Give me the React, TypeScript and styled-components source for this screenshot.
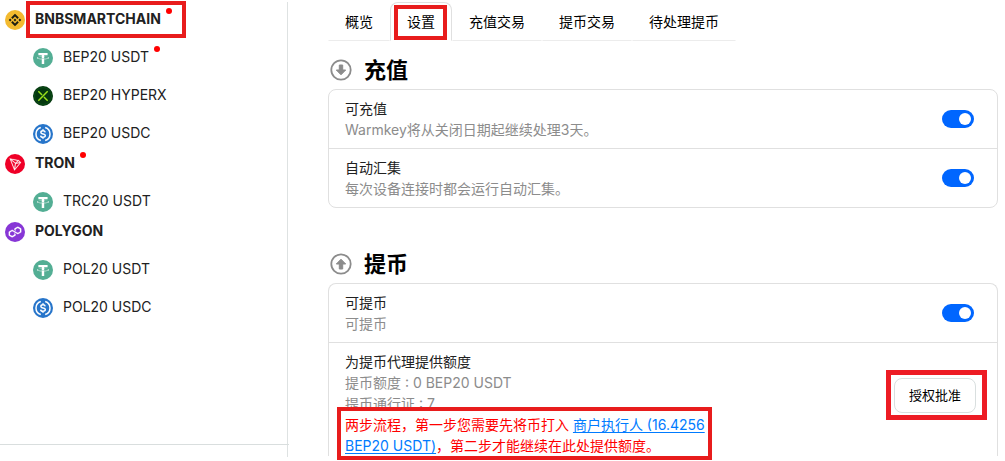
import React from "react";
import styled, { createGlobalStyle, css } from "styled-components";

const GlobalStyle = createGlobalStyle`
  *, *::before, *::after { box-sizing: border-box; }
  body {
    margin: 0;
    background: #fff;
    color: #212121;
    font: 14px/21px Inter, "Noto Sans CJK SC", sans-serif;
  }
  button, input { font: inherit; color: inherit; }
`;

const Page = styled.div`
  display: flex;
  min-height: 100vh;
  padding: 2px 7px 4px 0;
`;

const Sidebar = styled.nav`
  display: flex;
  flex-direction: column;
  flex: 0 0 288px;
  padding-top: 7px;
  border-right: 1px solid #dee2e2;
`;

const SidebarFooter = styled.div`
  height: 13px;
  margin: auto -2px 0 0;
  border-top: 1px solid #d9dede;
`;

const List = styled.ul`
  margin: 0;
  padding: 0;
  list-style: none;
`;

const Item = styled.a<{ $level: "chain" | "token" }>`
  display: flex;
  align-items: flex-start;
  gap: 10px;
  color: inherit;
  text-decoration: none;
  ${({ $level }) =>
    $level === "chain"
      ? css`
          height: 30px;
          padding: 1px 0 0 5px;
          font-weight: 700;
        `
      : css`
          height: 38px;
          padding: 9px 0 0 33px;
        `}
`;

const ItemLabel = styled.span`
  position: relative;
  display: flex;
  height: 20px;
  line-height: 18px;
`;

const Dot = styled.span`
  flex: none;
  width: 6px;
  height: 6px;
  margin: -2px 0 0 5px;
  border-radius: 50%;
  background: #f00;
`;

const Highlight = styled.span<{ $inset: string; $thick?: boolean }>`
  position: absolute;
  inset: ${({ $inset }) => $inset};
  border: ${({ $thick }) => ($thick ? "5px solid #ed1c24" : "4px solid #e81c1c")};
  pointer-events: none;
`;

const Main = styled.main`
  flex: 1;
  min-width: 0;
  padding-left: 40px;
`;

const Tabs = styled.div`
  display: flex;
`;

const Tab = styled.button<{ $active: boolean }>`
  position: relative;
  padding: 8px 16px;
  border: 1px solid transparent;
  border-bottom-color: #ececec;
  background: none;
  color: #000;
  white-space: nowrap;
  ${({ $active }) =>
    $active &&
    css`
      border-color: #e0e0e0 #e0e0e0 transparent;
      border-radius: 8px 8px 0 0;
    `}
`;

const Section = styled.section`
  padding-bottom: 27px;
  &:last-child { padding-bottom: 0; }
`;

const Heading = styled.h2`
  display: flex;
  align-items: center;
  gap: 12px;
  margin: 0;
  padding: 15px 0 5px 2px;
  color: #000;
  font-size: 22px;
  line-height: 28px;
  font-weight: 700;
`;

const Card = styled.div<{ $open?: boolean }>`
  border: 1px solid #e0e0e0;
  border-radius: 8px;
  ${({ $open }) =>
    $open &&
    css`
      border-bottom: 0;
      border-radius: 8px 8px 0 0;
    `}
`;

const Row = styled.div`
  display: flex;
  align-items: center;
  justify-content: space-between;
  padding: 8px 23px 8px 16px;
  & + & { border-top: 1px solid #e0e0e0; }
`;

const AllowanceRow = styled(Row)`
  align-items: flex-start;
  padding: 8px 21px 0 16px;
`;

const Title = styled.label`
  display: block;
`;

const Note = styled.div`
  color: #8c8c8c;
`;

const Notice = styled.div`
  position: relative;
  max-width: 364px;
  color: #f00;
  a { color: #007bff; text-underline-offset: 2px; }
`;

const Switch = styled.input`
  appearance: none;
  display: flex;
  flex: none;
  align-items: center;
  justify-content: flex-end;
  width: 32px;
  height: 18px;
  margin: 0;
  padding: 0 3px;
  border-radius: 9px;
  background: #b8b8b8;
  &::before {
    content: "";
    width: 12px;
    height: 12px;
    border-radius: 50%;
    background: #fff;
  }
  &:checked { background: #0066ff; }
  &:not(:checked) { justify-content: flex-start; }
`;

const ApproveButton = styled.button`
  position: relative;
  flex: none;
  height: 35px;
  margin-top: 27px;
  padding: 0 14px;
  border: 1px solid #d9dfdf;
  border-radius: 8px;
  background: #fff;
  color: #000;
  font-size: 13px;
`;

const Coin = styled.svg`
  flex: none;
  width: 20px;
  height: 20px;
`;

type CoinName = "bnb" | "usdt" | "hyperx" | "usdc" | "tron" | "polygon";

const COIN_BG: Record<CoinName, string> = {
  bnb: "#f3ba2f",
  usdt: "#53ae94",
  hyperx: "#05380f",
  usdc: "#2775ca",
  tron: "#ef0027",
  polygon: "#8736d6",
};

const COIN_ART: Record<CoinName, React.ReactNode> = {
  bnb: (
    <path
      transform="translate(6 6) scale(.8333)"
      fill="#1e1e12"
      d="M16.624 13.92l2.718 2.716-7.353 7.353-7.353-7.352 2.717-2.717 4.636 4.66 4.635-4.66zm4.637-4.636L24 12l-2.715 2.716L18.568 12l2.693-2.716zm-9.272 0l2.716 2.692-2.717 2.717L9.272 12l2.716-2.715zm-9.273 0L5.41 12l-2.692 2.692L0 12l2.716-2.716zM11.99.01l7.353 7.33-2.718 2.715-4.635-4.635-4.636 4.66-2.717-2.716L11.989.011z"
    />
  ),
  usdt: (
    <path
      fill="#fff"
      d="M17.922 17.383v-.002c-.11.008-.677.042-1.942.042-1.01 0-1.721-.03-1.971-.042v.003c-3.888-.171-6.79-.848-6.79-1.658 0-.809 2.902-1.486 6.79-1.66v2.644c.254.018.982.061 1.988.061 1.207 0 1.812-.05 1.925-.06v-2.643c3.88.173 6.775.85 6.775 1.658 0 .81-2.895 1.485-6.775 1.657m0-3.59v-2.366h5.414V7.819H8.595v3.608h5.414v2.365c-4.4.202-7.709 1.074-7.709 2.118 0 1.044 3.309 1.915 7.709 2.118v7.582h3.913v-7.584c4.393-.202 7.694-1.073 7.694-2.116 0-1.043-3.301-1.914-7.694-2.117"
    />
  ),
  hyperx: (
    <>
      <circle cx="16" cy="16" r="13.5" fill="none" stroke="#0d5a1c" />
      <path d="M8.500 8.500l6 6M17.500 17.500l6 6M23.500 8.500l-15 15" fill="none" stroke="#9be21c" strokeWidth="2.4" />
    </>
  ),
  usdc: (
    <g fill="none" stroke="#fff" strokeWidth="2.4">
      <path d="M12.5 5.500a11 11 0 0 0 0 21M19.500 5.500a11 11 0 0 1 0 21" />
      <path d="M19.6 13.3c-.4-1.6-1.6-2.4-3.6-2.4-2.1 0-3.4 1-3.4 2.6 0 3.6 7.1 1.4 7.1 5 0 1.6-1.4 2.7-3.7 2.7-2.2 0-3.6-1-3.8-2.7M16 8.5v2.4M16 21.2v2.4" />
    </g>
  ),
  tron: (
    <path
      fill="#fff"
      stroke="#fff"
      strokeWidth=".4"
      d="M21.932 9.913L7.5 7.257l7.595 19.112 10.583-12.894-3.746-3.562zm-.232 1.17l2.208 2.099-6.038 1.093 3.83-3.192zm-5.142 2.973l-6.364-5.278 10.402 1.914-4.038 3.364zm-.453.934l-1.038 8.58L9.472 9.487l6.633 5.502zm.96.455l6.687-1.21-7.67 9.343.983-8.133z"
    />
  ),
  polygon: (
    <path
      transform="translate(0 32) scale(1 -1)"
      fill="#fff"
      stroke="#fff"
      strokeWidth=".3"
      d="M21.092 12.693c-.369-.215-.848-.215-1.254 0l-2.879 1.654-1.955 1.078-2.879 1.653c-.369.216-.848.216-1.254 0l-2.288-1.294c-.369-.215-.627-.61-.627-1.042V12.19c0-.431.221-.826.627-1.042l2.25-1.258c.37-.216.85-.216 1.256 0l2.25 1.258c.37.216.628.611.628 1.042v1.654l1.955-1.115v-1.653a1.16 1.16 0 00-.627-1.042l-4.17-2.372c-.369-.216-.848-.216-1.254 0l-4.244 2.372A1.16 1.16 0 006 11.076v4.78c0 .432.221.827.627 1.043l4.244 2.372c.369.215.849.215 1.254 0l2.879-1.618 1.955-1.114 2.879-1.617c.369-.216.848-.216 1.254 0l2.251 1.258c.37.215.627.61.627 1.042v2.552c0 .431-.22.826-.627 1.042l-2.25 1.294c-.37.216-.85.216-1.255 0l-2.251-1.258c-.37-.216-.628-.611-.628-1.042v-1.654l-1.955 1.115v1.653c0 .431.221.827.627 1.042l4.244 2.372c.369.216.848.216 1.254 0l4.244-2.372c.369-.215.627-.61.627-1.042v-4.78a1.16 1.16 0 00-.627-1.042l-4.28-2.409z"
    />
  ),
};

function CoinIcon({ name }: { name: CoinName }) {
  return (
    <Coin viewBox="0 0 32 32" aria-hidden="true">
      <circle cx="16" cy="16" r="16" fill={COIN_BG[name]} />
      {COIN_ART[name]}
    </Coin>
  );
}

function ArrowIcon({ up }: { up?: boolean }) {
  return (
    <svg width="22" height="22" viewBox="0 0 22 22" aria-hidden="true">
      <circle cx="11" cy="11" r="9.7" fill="none" stroke="#8c8c8c" strokeWidth="1.8" />
      <path
        transform={up ? "rotate(180 11 11)" : undefined}
        fill="#8c8c8c"
        stroke="#8c8c8c"
        strokeLinejoin="round"
        d="M9.3 6h3.4v5h3L11 15.8 6.300 11h3z"
      />
    </svg>
  );
}

interface Entry {
  label: string;
  coin: CoinName;
  dot?: boolean;
}

const CHAINS: (Entry & { marked?: boolean; tokens: Entry[] })[] = [
  {
    label: "BNBSMARTCHAIN",
    coin: "bnb",
    dot: true,
    marked: true,
    tokens: [
      { label: "BEP20 USDT", coin: "usdt", dot: true },
      { label: "BEP20 HYPERX", coin: "hyperx" },
      { label: "BEP20 USDC", coin: "usdc" },
    ],
  },
  { label: "TRON", coin: "tron", dot: true, tokens: [{ label: "TRC20 USDT", coin: "usdt" }] },
  {
    label: "POLYGON",
    coin: "polygon",
    tokens: [
      { label: "POL20 USDT", coin: "usdt" },
      { label: "POL20 USDC", coin: "usdc" },
    ],
  },
];

const TABS = ["概览", "设置", "充值交易", "提币交易", "待处理提币"];

function SwitchRow({ id, title, note }: { id: string; title: string; note: string }) {
  return (
    <Row>
      <div>
        <Title htmlFor={id}>{title}</Title>
        <Note>{note}</Note>
      </div>
      <Switch id={id} type="checkbox" role="switch" defaultChecked />
    </Row>
  );
}

export default function App() {
  return (
    <>
      <GlobalStyle />
      <Page>
        <Sidebar>
          <List>
            {CHAINS.map((chain) => (
              <li key={chain.label}>
                <Item href="#" $level="chain">
                  <CoinIcon name={chain.coin} />
                  <ItemLabel>
                    {chain.label}
                    {chain.dot && <Dot />}
                    {chain.marked && <Highlight $inset="-9px -14px -8px -9px" />}
                  </ItemLabel>
                </Item>
                <List>
                  {chain.tokens.map((token) => (
                    <li key={token.label}>
                      <Item href="#" $level="token">
                        <CoinIcon name={token.coin} />
                        <ItemLabel>
                          {token.label}
                          {token.dot && <Dot />}
                        </ItemLabel>
                      </Item>
                    </li>
                  ))}
                </List>
              </li>
            ))}
          </List>
          <SidebarFooter />
        </Sidebar>
        <Main>
          <Tabs role="tablist">
            {TABS.map((tab) => (
              <Tab key={tab} type="button" role="tab" aria-selected={tab === "设置"} $active={tab === "设置"}>
                {tab}
                {tab === "设置" && <Highlight $inset="2px 4px 0 3px" />}
              </Tab>
            ))}
          </Tabs>
          <Section>
            <Heading>
              <ArrowIcon />
              充值
            </Heading>
            <Card>
              <SwitchRow id="deposit" title="可充值" note="Warmkey将从关闭日期起继续处理3天。" />
              <SwitchRow id="collect" title="自动汇集" note="每次设备连接时都会运行自动汇集。" />
            </Card>
          </Section>
          <Section>
            <Heading>
              <ArrowIcon up />
              提币
            </Heading>
            <Card $open>
              <SwitchRow id="withdraw" title="可提币" note="可提币" />
              <AllowanceRow>
                <div>
                  <Title as="div">为提币代理提供额度</Title>
                  <Note>提币额度 : 0 BEP20 USDT</Note>
                  <Note>提币通行证 : 7</Note>
                  <Notice>
                    两步流程，第一步您需要先将币打入 <a href="#">商户执行人 (16.4256 BEP20 USDT)</a>
                    ，第二步才能继续在此处提供额度。
                    <Highlight $inset="-7px -3px -4px -8px" />
                  </Notice>
                </div>
                <ApproveButton type="button">
                  授权批准
                  <Highlight $inset="-9px -12px -8px -9px" $thick />
                </ApproveButton>
              </AllowanceRow>
            </Card>
          </Section>
        </Main>
      </Page>
    </>
  );
}
